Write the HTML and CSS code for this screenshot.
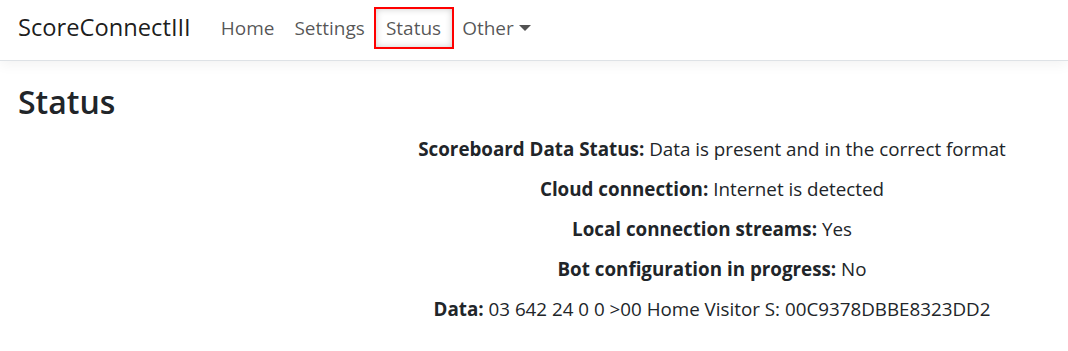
FILE: index.html
```html
<!DOCTYPE html>
<html>
<head>
  <title>Status - ScoreConnectIII</title>
  <link rel="stylesheet" href="styles.css">
</head>
<body>
  <header class="navbar">
    <a class="brand" href="#">ScoreConnectIII</a>
    <ul class="nav">
      <li><a class="nav-link" href="#">Home</a></li>
      <li><a class="nav-link" href="#">Settings</a></li>
      <li><a class="nav-link active" href="#">Status</a></li>
      <li><a class="nav-link dropdown-toggle" href="#">Other</a></li>
    </ul>
  </header>

  <main>
    <h1 class="page-title">Status</h1>
    <div class="status-grid">
      <div></div>
      <div class="status-list">
        <p><b>Scoreboard Data Status:</b> Data is present and in the correct format</p>
        <p><b>Cloud connection:</b> Internet is detected</p>
        <p><b>Local connection streams:</b> Yes</p>
        <p><b>Bot configuration in progress:</b> No</p>
        <p><b>Data:</b> 03 642 24 0 0 &gt;00 Home Visitor S: 00C9378DBBE8323DD2</p>
      </div>
    </div>
  </main>
</body>
</html>
```

FILE: styles.css
```css
body {
  margin: 0;
  font-family: "Open Sans", "Noto Sans", sans-serif;
  color: #212529;
  background: #fff;
}

a {
  text-decoration: none;
}

.navbar {
  display: flex;
  align-items: center;
  height: 60px;
  padding: 0 18px;
  border-bottom: 1px solid #dee2e6;
  box-shadow: 0 4px 12px rgba(0, 0, 0, .05);
}

.brand {
  font-size: 23.7px;
  color: rgba(0, 0, 0, .9);
  margin-right: 20px;
  margin-top: -7px;
}

.nav {
  display: flex;
  list-style: none;
  margin: 0;
  padding: 0;
  margin-top: -5px;
}

.nav-link {
  display: block;
  padding: 0 10px;
  line-height: 38px;
  font-size: 19px;
  color: rgba(0, 0, 0, .68);
}

.nav-link.active {
  outline: 2px solid #f00;
  box-shadow: inset 0 0 7px rgba(0, 0, 0, .2);
  margin-left: 1px;
  padding-right: 11px;
}

.dropdown-toggle::after {
  content: "";
  display: inline-block;
  margin-left: 5px;
  vertical-align: 4px;
  border-top: 6px solid;
  border-left: 6px solid transparent;
  border-right: 6px solid transparent;
}

.page-title {
  margin: 22px 0 8px;
  padding: 0 18px;
  font-size: 32px;
  font-weight: 600;
  line-height: 1.2;
}

.status-grid {
  display: grid;
  grid-template-columns: 1fr 2fr;
}

.status-list {
  text-align: center;
  font-size: 18.8px;
}

.status-list p {
  margin: 0;
  line-height: 40px;
}
```
